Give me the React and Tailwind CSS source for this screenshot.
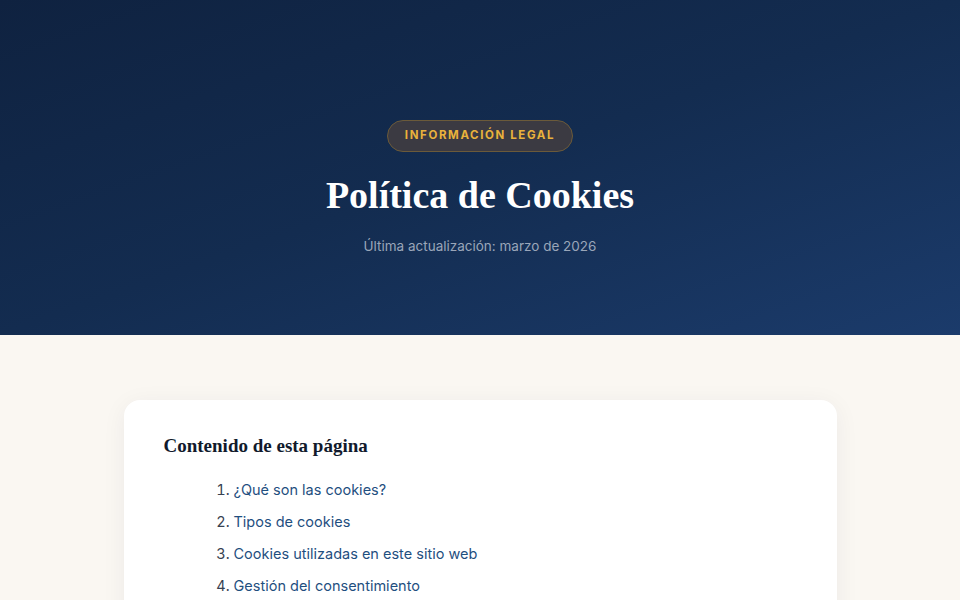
import React from 'react';

const sections = [
  '¿Qué son las cookies?',
  'Tipos de cookies',
  'Cookies utilizadas en este sitio web',
  'Gestión del consentimiento',
  'Cómo desactivar las cookies',
  'Cambios en esta política',
];

export default function App() {
  return (
    <div className="min-h-screen bg-[#faf7f2] font-['Inter','DejaVu_Sans',sans-serif]">
      {/* Hero */}
      <header className="h-[335px] bg-gradient-to-br from-[#0f2240] via-[#132c50] to-[#1b3b6b] flex flex-col items-center pt-[120px] text-center">
        <div className="px-[17px] h-[32px] flex items-center rounded-full bg-[#3b3a42] border border-[#6b5a3a] text-[#e9b23c] text-[11.5px] font-bold tracking-[0.14em] uppercase">
          Información legal
        </div>
        <h1 className="mt-[19px] text-white text-[38px] leading-[48px] font-bold font-['Liberation_Serif','DejaVu_Serif',serif]">
          Política de Cookies
        </h1>
        <p className="mt-[17px] text-[13.5px] text-[#9aa6b9]">Última actualización: marzo de 2026</p>
      </header>

      {/* Content */}
      <main className="px-6 pt-[65px] pb-16">
        <div className="mx-auto w-[713px] bg-white rounded-2xl shadow-[0_4px_24px_rgba(15,34,64,0.06)] px-10 pt-[33px] pb-10">
          <h2 className="text-[19px] leading-[26px] font-bold text-[#111a2c] font-['Liberation_Serif','DejaVu_Serif',serif]">
            Contenido de esta página
          </h2>
          <ol className="mt-[15px] list-decimal pl-[70px] text-[14.5px] text-[#374151]">
            {sections.map((s) => (
              <li key={s} className="h-[32px] leading-[32px] marker:text-[#374151]">
                <a href="#" className="text-[#1f4f7f]">{s}</a>
              </li>
            ))}
          </ol>
        </div>
      </main>
    </div>
  );
}
